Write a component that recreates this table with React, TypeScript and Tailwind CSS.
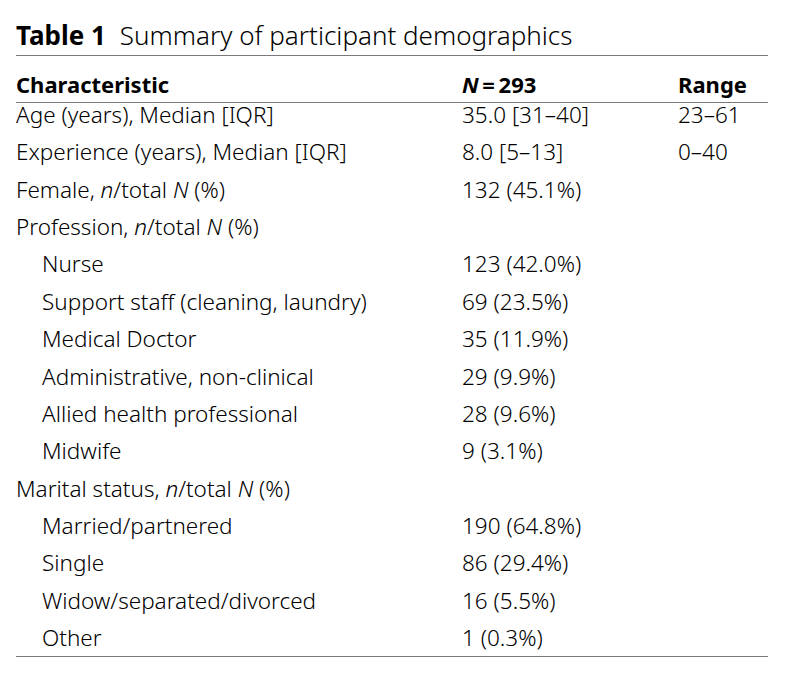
const rows: { label: React.ReactNode; value: string; range?: string; indent?: boolean }[] = [
  { label: 'Age (years), Median [IQR]', value: '35.0 [31–40]', range: '23–61' },
  { label: 'Experience (years), Median [IQR]', value: '8.0 [5–13]', range: '0–40' },
  { label: <>Female, <i>n</i>/total <i>N</i> (%)</>, value: '132 (45.1%)' },
  { label: <>Profession, <i>n</i>/total <i>N</i> (%)</>, value: '' },
  { label: 'Nurse', value: '123 (42.0%)', indent: true },
  { label: 'Support staff (cleaning, laundry)', value: '69 (23.5%)', indent: true },
  { label: 'Medical Doctor', value: '35 (11.9%)', indent: true },
  { label: 'Administrative, non-clinical', value: '29 (9.9%)', indent: true },
  { label: 'Allied health professional', value: '28 (9.6%)', indent: true },
  { label: 'Midwife', value: '9 (3.1%)', indent: true },
  { label: <>Marital status, <i>n</i>/total <i>N</i> (%)</>, value: '' },
  { label: 'Married/partnered', value: '190 (64.8%)', indent: true },
  { label: 'Single', value: '86 (29.4%)', indent: true },
  { label: 'Widow/separated/divorced', value: '16 (5.5%)', indent: true },
  { label: 'Other', value: '1 (0.3%)', indent: true },
];

export default function App() {
  return (
    <div className="w-[794px] h-[674px] bg-white text-black font-['Noto_Sans',sans-serif] pl-4 pt-[18px]">
      <div className="w-[752px]">
        <h1 className="text-[26px] leading-[34px] font-light whitespace-nowrap">
          <span className="font-bold">Table 1</span>
          <span className="ml-[14px]">Summary of participant demographics</span>
        </h1>
        <div className="border-t-[1.5px] border-[#7a7a7a] mt-[3px]" />
        <div className="grid grid-cols-[446px_216px_1fr] text-[22px] font-bold leading-[36px] pt-[10px]">
          <div>Characteristic</div>
          <div><i>N</i>&thinsp;=&thinsp;293</div>
          <div>Range</div>
        </div>
        <div className="border-t-[1.5px] border-[#7a7a7a]" />
        <div className="-mt-[7px] text-[22.5px] font-light">
          {rows.map((r, i) => (
            <div key={i} className="grid grid-cols-[446px_216px_1fr] h-[37.36px] leading-[37.36px]">
              <div className={r.indent ? 'pl-[26px]' : ''}>{r.label}</div>
              <div>{r.value}</div>
              <div>{r.range ?? ''}</div>
            </div>
          ))}
        </div>
        <div className="border-t-[1.5px] border-[#7a7a7a]" />
      </div>
    </div>
  );
}
